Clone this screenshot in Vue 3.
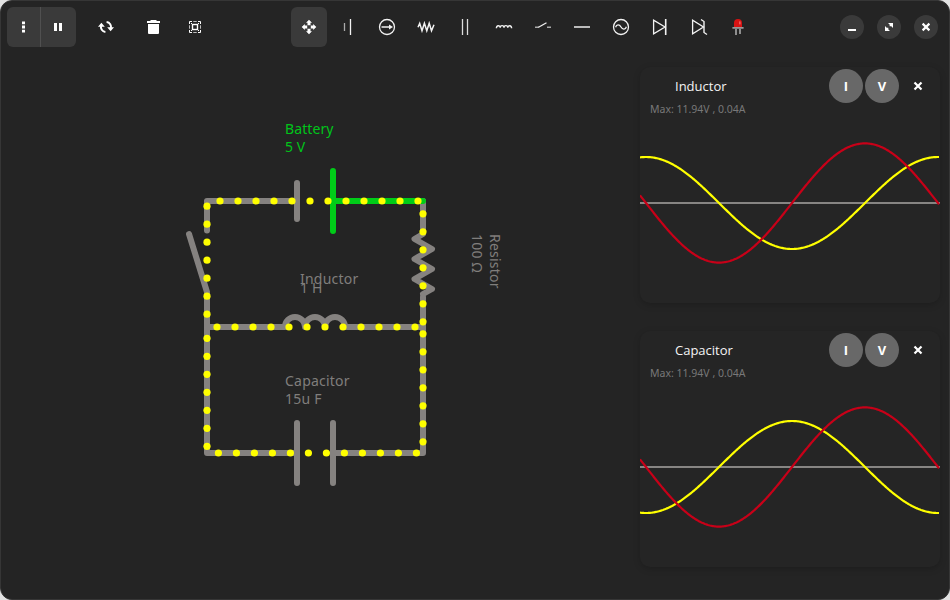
<script setup>
const tools = [
  'move', 'battery', 'current', 'resistor', 'capacitor', 'inductor',
  'switch', 'wire', 'ac', 'diode', 'zener', 'led'
]

const run = (start, count) => Array.from({ length: count }, (_, i) => start + i * 18)
const dots = [
  ...run(220, 12).map(x => [x, 201]),
  ...run(217, 12).map(x => [x, 327]),
  ...run(218.4, 12).map(x => [x, 453]),
  ...run(206.2, 7).map(y => [207, y]),
  ...run(338.3, 7).map(y => [207, y]),
  ...run(213.8, 7).map(y => [423, y]),
  ...run(333.8, 7).map(y => [423, y])
]

const wave = (amp, fn) => {
  let d = ''
  for (let x = 0; x <= 299.5; x += 1) {
    const y = 72 - amp * fn((2 * Math.PI * (x - 152)) / 292)
    d += (x ? 'L' : 'M') + x + ' ' + y.toFixed(2)
  }
  return d
}
const scopes = [
  { name: 'Inductor', current: wave(-46, Math.cos), voltage: wave(59.6, Math.sin) },
  { name: 'Capacitor', current: wave(46, Math.cos), voltage: wave(59.6, Math.sin) }
]
</script>

<template>
  <div class="window">
    <header class="bar">
      <div class="group">
        <button class="half menu">
          <svg width="16" height="16" viewBox="0 0 16 16" fill="#fff">
            <path d="M7 2.500h3v2.800H7zM7 6.600h3v2.800H7zM7 10.700h3v2.800H7z" />
          </svg>
        </button>
        <button class="half pause">
          <svg width="16" height="16" viewBox="0 0 16 16" fill="#fff"><path d="M4 4h3v8H4zM9 4h3v8H9z" /></svg>
        </button>
      </div>
      <div class="actions">
        <button class="tool">
          <svg width="16" height="16" viewBox="0 0 16 16" fill="none" stroke="#fff" stroke-width="2">
            <path d="M7.4 13A5 5 0 0 1 3.2 6.5M8.6 3a5 5 0 0 1 4.2 6.5" />
            <path d="M0 7.8L3.4 3.8 6.8 7.8zM9.2 8.2h6.8L12.6 12.2z" fill="#fff" stroke="none" />
          </svg>
        </button>
        <button class="tool trash">
          <svg width="16" height="16" viewBox="0 0 16 16" fill="#fff"><path d="M6 1h5l1 1h3v2H2V2h3zM3 5h11v9a1 1 0 0 1-1 1H4a1 1 0 0 1-1-1z" /></svg>
        </button>
        <button class="tool">
          <svg width="16" height="16" viewBox="0 0 16 16" fill="none" stroke="#fff">
            <path d="M2.5 5V2.5H5M11 2.5h2.5V5M13.5 11v2.5H11M5 13.5H2.5V11" />
            <path d="M6.5 2.5h3M6.5 13.5h3M2.5 6.5v3M13.5 6.5v3" stroke-dasharray="1.2 .6" />
            <rect x="5.5" y="5.5" width="5" height="5" stroke-width="1.4" />
            <path d="M4 4l1 1M12 4l-1 1M4 12l1-1M12 12l-1-1" />
          </svg>
        </button>
      </div>
      <nav class="tools">
        <button v-for="t in tools" :key="t" class="tool" :class="{ active: t === 'move' }">
          <svg width="18" height="18" viewBox="0 0 18 18" fill="none" stroke="#f2f2f2" stroke-width="1.3">
            <g v-if="t === 'move'" fill="#fff" stroke="none">
              <path d="M9 1.7l3 3.1h-1.500v2.4h-3V4.8H6zM9 16.3l3-3.1h-1.500v-2.4h-3v2.4H6zM1.7 9l3.1-3v1.500h2.4v3H4.8v1.500zM16.3 9l-3.1-3v1.500h-2.4v3h2.4v1.500z" />
            </g>
            <g v-else-if="t === 'battery'"><path d="M5.5 5v8" stroke="#aaa" /><path d="M11.5 1v16" /></g>
            <g v-else-if="t === 'current'">
              <circle cx="9" cy="9" r="7.5" /><path d="M3.5 9H12" /><path d="M11 6.5L15 9l-4 2.5z" fill="#f2f2f2" stroke="none" />
            </g>
            <path v-else-if="t === 'resistor'" d="M1 9.3L2.7 5.3 5 12.7 7.4 5.3 9.8 12.7 12.2 5.3 14.5 12.7 17 6.8" stroke-width="1.5" />
            <g v-else-if="t === 'capacitor'" stroke="#ddd"><path d="M6.5 1v16M11.5 1v16" /></g>
            <path v-else-if="t === 'inductor'" d="M1.4 10.3C1.4 6.9 5.2 6.9 5.2 9.8 5.2 6.9 9 6.9 9 9.8 9 6.9 12.8 6.9 12.8 9.8 12.8 6.9 16.6 6.9 16.6 10.3" stroke-width="1.4" />
            <g v-else-if="t === 'switch'"><path d="M1 9.2h4M13 9.2h4" stroke="#aaa" stroke-width="1.6" /><path d="M4.5 9.2l8-4.4" /></g>
            <path v-else-if="t === 'wire'" d="M1 9h16" stroke="#bbb" stroke-width="2" />
            <g v-else-if="t === 'ac'"><circle cx="9" cy="9" r="7.5" /><path d="M3.6 9.2C4.5 6.2 7.4 6 9 9s4.5 2.8 5.4-.2" /></g>
            <g v-else-if="t === 'diode'"><path d="M2.6 2.2v13.6L14 9z" /><path d="M14.7 1v16" stroke-width="1.6" /></g>
            <g v-else-if="t === 'zener'"><path d="M2.6 2.2v13.6L13.5 9z" /><path d="M11 1.5l3 2v11l3 2" stroke-width="1.4" /></g>
            <g v-else stroke="none">
              <path d="M5 9V5a4 4 0 0 1 8 0v4z" fill="#d81313" />
              <path d="M10.9 3.4v3" stroke="#ff9a9a" stroke-width=".9" />
              <path d="M3.4 9h11.2v1.800H3.4z" fill="#999" />
              <path d="M6.200 10.800h1.600V17H6.200zM10.200 10.800h1.600V16h-1.600z" fill="#aaa" />
            </g>
          </svg>
        </button>
      </nav>
      <div class="controls">
        <button class="round"><svg width="16" height="16" viewBox="0 0 16 16"><path d="M4 10h8v2H4z" fill="#fff" /></svg></button>
        <button class="round"><svg width="16" height="16" viewBox="0 0 16 16"><path d="M7 4h5v5l-1.700-1.700-1.600 0-.1-1.700zM4 7l1.700 1.700 1.600 0 .1 1.700L9 12H4z" fill="#fff" /></svg></button>
        <button class="round"><svg width="16" height="16" viewBox="0 0 16 16"><path d="M4.6 4.6l6.8 6.8M11.4 4.6l-6.8 6.8" stroke="#fff" stroke-width="2.2" /></svg></button>
      </div>
    </header>

    <main class="content">
      <svg class="circuit" width="639" height="545" viewBox="1 54 639 545">
        <g class="part">
          <path d="M207 230.5V201H297M423 201V234L414.500 239 432 249 414.500 259 432 269 414.500 279 432 289 423 294" />
          <path d="M423 297V453H333M297 453H207V292L189 234M297 183V219M297 423V483M333 423V483" />
          <path d="M207 327H285M345 327H423M285 327a10 10 0 0 1 20 0a10 10 0 0 1 20 0a10 10 0 0 1 20 0" />
        </g>
        <path class="part selected" d="M333 171V231M333 201H423" />
        <circle v-for="(d, i) in dots" :key="i" :cx="d[0]" :cy="d[1]" r="3.6" fill="#ff0" />
        <g class="label">
          <g class="green"><text x="285" y="134">Battery</text><text x="285" y="152">5 V</text></g>
          <text x="300" y="284">Inductor</text><text x="300" y="293">1 H</text>
          <text x="285" y="386">Capacitor</text><text x="285" y="404">15u F</text>
          <g transform="translate(490 234) rotate(90)"><text x="0" y="0">Resistor</text><text x="0" y="18">100 Ω</text></g>
        </g>
      </svg>
      <aside class="scopes">
        <section v-for="s in scopes" :key="s.name" class="scope">
          <div class="head">
            <h2>{{ s.name }}</h2>
            <button class="toggle">I</button>
            <button class="toggle">V</button>
            <button class="close">
              <svg width="16" height="16" viewBox="0 0 16 16"><path d="M4.500 4.500l7 7M11.500 4.500l-7 7" stroke="#fff" stroke-width="2.200" /></svg>
            </button>
          </div>
          <p class="max">Max: 11.94V , 0.04A</p>
          <svg class="plot" width="300" height="172" viewBox="0 0 300 172" fill="none" stroke-width="2.200">
            <path d="M0 72H300" stroke="#878583" stroke-width="2" />
            <path :d="s.current" stroke="#ff0" />
            <path :d="s.voltage" stroke="#c80018" />
          </svg>
        </section>
      </aside>
    </main>
  </div>
</template>

<style>
body { margin: 0; background: #e2e2e2; }
</style>

<style scoped>
.window {
  box-sizing: border-box;
  width: 950px;
  height: 600px;
  border: 1px solid #363636;
  border-radius: 12px;
  background: #242424;
  overflow: hidden;
  font-family: "Noto Sans", "Open Sans", sans-serif;
}
button {
  display: flex;
  align-items: center;
  justify-content: center;
  flex: none;
  margin: 0;
  padding: 0;
  border: 0;
  background: none;
  color: #fff;
  font-family: inherit;
}
svg { display: block; flex: none; }
.bar {
  display: flex;
  align-items: center;
  box-sizing: border-box;
  height: 53px;
  padding: 0 11px 1px 6px;
}
.group {
  display: flex;
  width: 69px;
  height: 40px;
  border-radius: 6px;
  background: #3a3a3a;
}
.half { box-sizing: border-box; height: 40px; padding-right: 1px; }
.menu { width: 34px; border-right: 1px solid #505050; }
.pause { width: 35px; }
.actions { display: flex; gap: 5px; margin-left: 12px; }
.trash { margin: 0 1px 0 6px; }
.tool { width: 36px; height: 40px; border-radius: 6px; }
.active { background: #3a3a3a; }
.tools { display: flex; gap: 3px; margin-left: 78px; }
.controls { display: flex; gap: 13px; margin-left: auto; }
.round { width: 24px; height: 24px; border-radius: 50%; background: #3a3a3a; }
.content { display: flex; height: 545px; }
.circuit { flex: none; }
.part {
  fill: none;
  stroke: #858280;
  stroke-width: 6;
  stroke-linecap: round;
  stroke-linejoin: round;
}
.selected { stroke: #00cc18; }
.label { font-size: 14px; letter-spacing: 0.22px; fill: #807e7c; }
.green { letter-spacing: 0.1px; fill: #00c41a; }
.scopes {
  display: flex;
  flex: none;
  flex-direction: column;
  gap: 28px;
  width: 300px;
  padding-top: 13px;
}
.scope {
  height: 236px;
  border-radius: 10px;
  background: #252525;
  box-shadow: 0 2px 7px rgba(0, 0, 0, 0.18);
  overflow: hidden;
}
.head { display: flex; align-items: center; height: 38px; padding-right: 14px; }
h2 { flex: 1; margin: 0 0 0 35px; color: #f4f4f4; font: 400 13px/18px "Open Sans", sans-serif; }
.toggle {
  width: 34px;
  height: 34px;
  margin-right: 2px;
  border-radius: 50%;
  background: #686868;
  font-family: "Open Sans", sans-serif;
  font-size: 13px;
  font-weight: 700;
}
.close { width: 16px; height: 16px; margin-left: 9px; }
.max {
  height: 14px;
  margin: -3px 0 15px 10px;
  color: #787878;
  font-size: 10.5px;
  line-height: 14px;
}
</style>
